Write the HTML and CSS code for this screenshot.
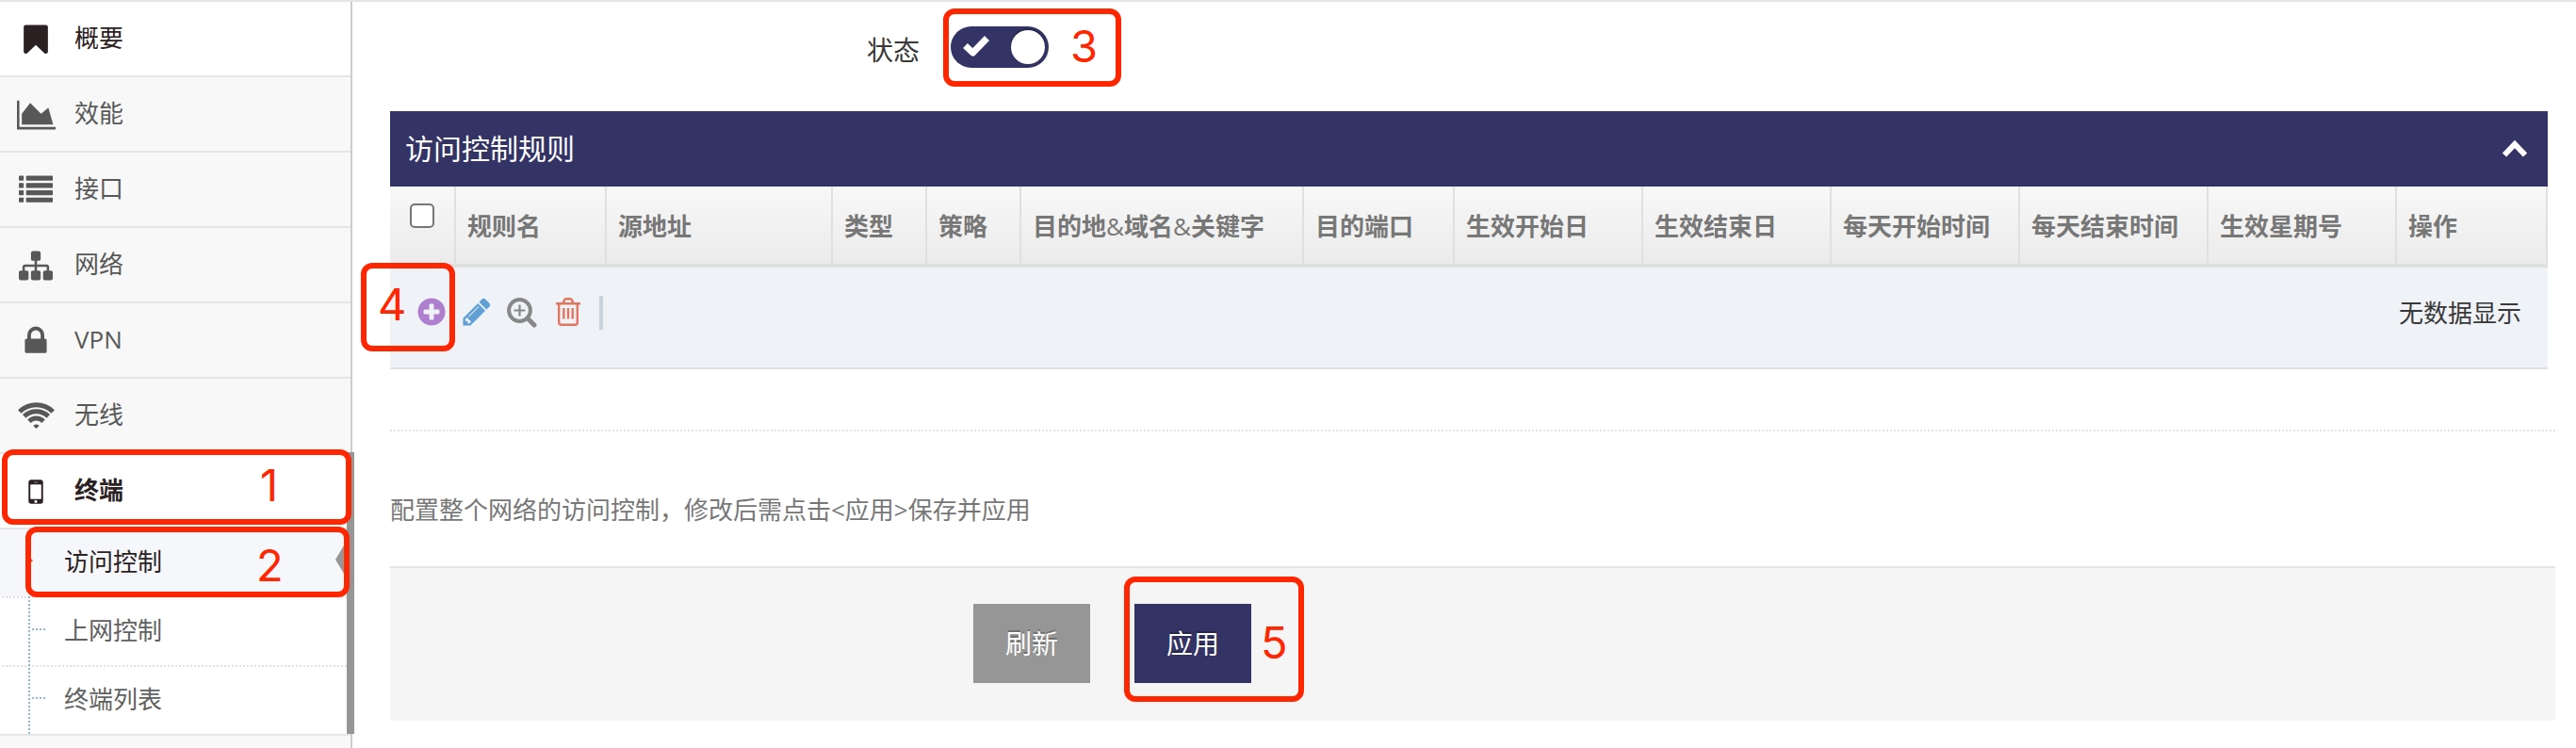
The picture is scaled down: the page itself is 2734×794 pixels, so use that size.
FILE: index.html
```html
<!DOCTYPE html>
<html lang="zh-CN">
<head>
<meta charset="utf-8">
<title>访问控制</title>
<link rel="stylesheet" href="styles.css">
</head>
<body>
<div class="page">
  <nav class="sidebar">
    <a class="item current"><svg class="icon" viewBox="0 0 1792 1792"><path d="M1420 128q23 0 44 9 33 13 52.500 41t19.500 62v1289q0 34-19.500 62t-52.500 41q-19 8-44 8-48 0-83-32l-441-424-441 424q-36 33-83 33-23 0-44-9-33-13-52.500-41t-19.500-62v-1289q0-34 19.500-62t52.500-41q21-9 44-9h1048z"/></svg><span>概要</span></a>
    <a class="item"><svg class="icon wide" viewBox="0 0 2048 1792"><path d="M2048 1536v128h-2048v-1536h128v1408h1920zm-384-1024l256 896h-1664v-576l448-576 576 576z"/></svg><span>效能</span></a>
    <a class="item"><svg class="icon" viewBox="0 0 1792 1792"><g><rect y="128" width="256" height="256" rx="32"/><rect x="384" y="128" width="1408" height="256" rx="32"/><rect y="512" width="256" height="256" rx="32"/><rect x="384" y="512" width="1408" height="256" rx="32"/><rect y="896" width="256" height="256" rx="32"/><rect x="384" y="896" width="1408" height="256" rx="32"/><rect y="1280" width="256" height="256" rx="32"/><rect x="384" y="1280" width="1408" height="256" rx="32"/></g></svg><span>接口</span></a>
    <a class="item"><svg class="icon" viewBox="0 0 1792 1792"><path d="M1792 1248v320q0 40-28 68t-68 28h-320q-40 0-68-28t-28-68v-320q0-40 28-68t68-28h96v-192h-512v192h96q40 0 68 28t28 68v320q0 40-28 68t-68 28h-320q-40 0-68-28t-28-68v-320q0-40 28-68t68-28h96v-192h-512v192h96q40 0 68 28t28 68v320q0 40-28 68t-68 28h-320q-40 0-68-28t-28-68v-320q0-40 28-68t68-28h96v-192q0-52 38-90t90-38h512v-192h-96q-40 0-68-28t-28-68v-320q0-40 28-68t68-28h320q40 0 68 28t28 68v320q0 40-28 68t-68 28h-96v192h512q52 0 90 38t38 90v192h96q40 0 68 28t28 68z"/></svg><span>网络</span></a>
    <a class="item"><svg class="icon" viewBox="0 0 1792 1792"><path d="M640 768h512v-192q0-106-75-181t-181-75-181 75-75 181v192zm832 96v576q0 40-28 68t-68 28h-960q-40 0-68-28t-28-68v-576q0-40 28-68t68-28h32v-192q0-184 132-316t316-132 316 132 132 316v192h32q40 0 68 28t28 68z"/></svg><span>VPN</span></a>
    <a class="item"><svg class="icon wide" viewBox="0 0 41 36"><g fill="none" stroke="currentColor" stroke-width="5"><path d="M2.800 13a25.100 25.100 0 0 1 35.400 0"/><path d="M7.700 17.900a18.200 18.200 0 0 1 25.600 0"/><path d="M12.900 23.200a10.700 10.700 0 0 1 15.200 0"/></g><path d="M20.500 31l-3.200-3q3.200-2.800 6.400 0z"/></svg><span>无线</span></a>
    <a class="item open"><svg class="icon" viewBox="0 0 1792 1792"><path d="M976 1408q0-33-23.500-56.500t-56.500-23.500-56.500 23.500-23.500 56.500 23.500 56.500 56.500 23.500 56.500-23.500 23.500-56.500zm208-160v-704q0-13-9.500-22.500t-22.500-9.500h-512q-13 0-22.500 9.500t-9.500 22.500v704q0 13 9.500 22.500t22.500 9.500h512q13 0 22.500-9.500t9.500-22.500zm-192-848q0-16-16-16h-160q-16 0-16 16t16 16h160q16 0 16-16zm288-16v1024q0 52-38 90t-90 38h-512q-52 0-90-38t-38-90v-1024q0-52 38-90t90-38h512q52 0 90 38t38 90z"/></svg><span>终端</span></a>
    <div class="submenu">
      <a class="sub active">访问控制<i class="caret"></i><i class="pointer"></i></a>
      <a class="sub">上网控制</a>
      <a class="sub">终端列表</a>
      <i class="tree"></i>
    </div>
    <i class="scrollbar"></i>
  </nav>

  <main class="main">
    <div class="status">
      <span class="status-label">状态</span>
      <span class="toggle"><svg class="check" viewBox="0 0 30 24"><path d="M3.500 12.500L11.500 20 26.500 4.500" fill="none" stroke="#fff" stroke-width="7" stroke-linejoin="round"/></svg><i class="knob"></i></span>
    </div>

    <section class="panel">
      <header class="panel-head"><h2 class="panel-title">访问控制规则</h2>
        <svg class="chevron" viewBox="0 0 28 20"><path d="M3 16.500L14 5l11 11.500" fill="none" stroke="#fff" stroke-width="6"/></svg>
      </header>
      <div class="grid-head">
        <div class="cell check-cell"><i class="checkbox"></i></div>
        <div class="cell">规则名</div><div class="cell">源地址</div><div class="cell">类型</div><div class="cell">策略</div>
        <div class="cell">目的地<span class="amp">&amp;</span>域名<span class="amp">&amp;</span>关键字</div><div class="cell">目的端口</div>
        <div class="cell">生效开始日</div><div class="cell">生效结束日</div><div class="cell">每天开始时间</div><div class="cell">每天结束时间</div><div class="cell">生效星期号</div><div class="cell">操作</div>
      </div>
      <div class="pager">
        <div class="tools">
          <svg class="tool add" viewBox="0 0 1792 1792"><path d="M1344 960v-128q0-26-19-45t-45-19h-256v-256q0-26-19-45t-45-19h-128q-26 0-45 19t-19 45v256h-256q-26 0-45 19t-19 45v128q0 26 19 45t45 19h256v256q0 26 19 45t45 19h128q26 0 45-19t19-45v-256h256q26 0 45-19t19-45zm320-64q0 209-103 385.500t-279.500 279.500-385.500 103-385.500-103-279.500-279.500-103-385.500 103-385.500 279.500-279.500 385.500-103 385.500 103 279.500 279.500 103 385.500z"/></svg>
          <svg class="tool edit" viewBox="0 0 1792 1792"><path d="M491 1536l91-91-235-235-91 91v107h128v128h107zm523-928q0-22-22-22-10 0-17 7l-542 542q-7 7-7 17 0 22 22 22 10 0 17-7l542-542q7-7 7-17zm-54-192l416 416-832 832h-416v-416zm683 96q0 53-37 90l-166 166-416-416 166-165q36-38 90-38 53 0 91 38l235 234q37 39 37 91z"/></svg>
          <svg class="tool view" viewBox="0 0 34 34"><g fill="none" stroke="currentColor"><circle cx="14.500" cy="15.500" r="11.400" stroke-width="4"/><path d="M22.800 23.800l7.200 7.200" stroke-width="5" stroke-linecap="round"/><path d="M8.500 15.500h12M14.500 9.500v12" stroke-width="2.200"/></g></svg>
          <svg class="tool remove" viewBox="0 0 34 34"><g fill="none" stroke="currentColor" stroke-width="2.400"><path d="M4 8.200h26M11.500 8l1.600-3.800q.6-1 1.800-1h4.200q1.200 0 1.800 1L22.500 8" /><path d="M7.200 8.500v19.500q0 2.800 2.400 2.800h14.800q2.400 0 2.400-2.800V8.500M12.300 13v11.500M17 13v11.500M21.700 13v11.500"/></g></svg>
          <i class="divider"></i>
        </div>
        <span class="empty">无数据显示</span>
      </div>
    </section>

    <div class="rule"></div>
    <p class="note">配置整个网络的访问控制，修改后需点击&lt;应用&gt;保存并应用</p>
    <footer class="actions"><button class="btn">刷新</button><button class="btn primary">应用</button></footer>
  </main>

  <div class="mark mark-1"><b>1</b></div>
  <div class="mark mark-2"><b>2</b></div>
  <div class="mark mark-3"><b>3</b></div>
  <div class="mark mark-4"><b>4</b></div>
  <div class="mark mark-5"><b>5</b></div>
</div>
</body>
</html>
```
FILE: styles.css
```css
* { box-sizing: border-box; }
body { margin: 0; background: #fff; font: 26px/40px "Open Sans", "Noto Sans CJK SC", sans-serif; color: #393939; }
.page { position: relative; display: flex; width: 2734px; height: 794px; overflow: hidden; border-top: 2px solid #e5e5e5; }

/* sidebar */
.sidebar { position: relative; flex: none; width: 374px; background: #f8f8f8; border-right: 2px solid #ccc; }
.item { display: flex; align-items: center; height: 80px; padding-left: 17px; gap: 20px; border-bottom: 2px solid #e5e5e5; color: #585858; }
.item span { line-height: 40px; margin-bottom: 2px; }
.icon { flex: none; width: 36px; height: 36px; margin: 1px 3px 0; fill: currentColor; }
.icon.wide { width: 41px; margin: 1px 0 0 .5px; }
.icon.wide + span { margin-left: .5px; }
.item.current { background: #fff; color: #2b2122; }
.item.open { background: #fff; color: #2b2122; font-weight: 700; }
.submenu { position: relative; background: #fff; height: 219px; border-bottom: 2px solid #e5e5e5; }
.sub { position: relative; display: block; height: 73px; padding: 14px 0 0 68px; margin-right: 4px; line-height: 40px; color: #616161; }
.sub + .sub { background: repeating-linear-gradient(90deg, transparent 0 2px, #e0e0e0 2px 4px) 0 0 / 100% 2px no-repeat; padding-top: 16px; }
.sub:first-child { height: 71px; }
.sub.active { background: #f5f7fb; color: #2b2122; }
.sub + .sub::after { content: ""; position: absolute; left: 34px; top: 34px; width: 14px; height: 2px; background: repeating-linear-gradient(90deg, #8fb8d8 0 2px, transparent 2px 4px); }
.caret { position: absolute; left: 29px; top: 27px; border: solid transparent; border-width: 6px 0 6px 6px; border-left-color: #c86139; }
.pointer { position: absolute; right: 0; top: 12px; border: solid transparent; border-width: 20px 12px 20px 0; border-right-color: #969696; }
.tree { position: absolute; left: 30px; top: 71px; bottom: 0; width: 2px; background: repeating-linear-gradient(180deg, #8fb8d8 0 2px, transparent 2px 4px); }
.scrollbar { position: absolute; left: 368px; top: 478px; width: 8px; height: 299px; background: #969696; }

/* content */
.main { flex: none; width: 2298px; margin-left: 40px; }
.status { display: flex; align-items: center; height: 116px; padding: 0 0 20px 506px; font-size: 28px; }
.status-label { width: 89px; line-height: 40px; margin-top: 6px; }
.toggle { position: relative; width: 104px; height: 44px; border-radius: 22px; background: #333365; }
.check { position: absolute; left: 12px; top: 8px; width: 30px; height: 24px; }
.knob { position: absolute; right: 4px; top: 4px; width: 36px; height: 36px; border-radius: 50%; background: #fff; box-shadow: 0 -1px 2px rgba(0, 0, 0, .4); }
.panel { width: 2290px; }
.panel-head { display: flex; justify-content: space-between; align-items: center; height: 80px; padding: 0 21px 0 16px; background: #333365; color: #fff; }
.panel-title { margin: 0; font-size: 30px; font-weight: 400; line-height: 40px; }
.chevron { width: 28px; height: 20px; }
.grid-head { display: grid; grid-template-columns: 70px 160px 240px 100px 100px 300px 160px 200px 200px 200px 200px 200px 160px; height: 86px; border-bottom: 4px solid #e0e0e0; background: linear-gradient(#f8f8f8, #ebebeb); }
.cell { padding: 22px 0 0 12px; border-right: 2px solid #e0e0e0; color: #777; font-weight: 700; line-height: 40px; white-space: nowrap; }
.amp { font-weight: 500; }
.check-cell { padding: 18px 0 0 21px; }
.checkbox { display: block; width: 26px; height: 26px; border: 2px solid #767676; border-radius: 5px; background: #fff; }
.pager { display: flex; justify-content: space-between; height: 108px; padding: 28px 28px 0 27px; border-bottom: 2px solid #e0e0e0; background: #eff2f7; }
.empty { line-height: 40px; }
.tools { display: flex; gap: 14.200px; padding-top: 2px; }
.tool { width: 34px; height: 34px; fill: currentColor; }
.add { color: #ae7fce; }
.edit { color: #60a0d4; }
.view { color: #888; }
.remove { color: #e27560; }
.divider { width: 4px; height: 36px; margin-left: 2.200px; background: #c8d3dc; }
.rule { height: 2px; margin-top: 64px; background: repeating-linear-gradient(90deg, #e2e2e2 0 2px, transparent 2px 4px); }
.note { margin: 63px 0 0; height: 80px; line-height: 40px; color: #777; }
.actions { display: flex; gap: 47px; height: 164px; padding: 38px 0 0 619px; border-top: 2px solid #e5e5e5; background: #f5f5f5; }
.btn { width: 124px; height: 84px; padding: 0; border: 0; background: #969696; color: #fff; font: 28px/40px "Open Sans", "Noto Sans CJK SC", sans-serif; text-shadow: 0 -2px 0 rgba(0, 0, 0, .25); }
.btn.primary { background: #333365; }

/* numbered callouts */
.mark { position: absolute; border: 6px solid #ff2600; border-radius: 12px; color: #ff2600; }
.mark b { position: absolute; font: 400 47px/48px Inter, sans-serif; }
.mark-1 { left: 2px; top: 475px; width: 371px; height: 80px; }
.mark-1 b { left: 268px; top: 8px; }
.mark-2 { left: 27px; top: 557px; width: 344px; height: 75px; }
.mark-2 b { left: 239px; top: 11px; }
.mark-3 { left: 1001px; top: 7px; width: 189px; height: 83px; }
.mark-3 b { left: 129px; top: 10px; }
.mark-4 { left: 383px; top: 277px; width: 100px; height: 94px; }
.mark-4 b { left: 12px; top: 14px; }
.mark-5 { left: 1193px; top: 610px; width: 191px; height: 133px; }
.mark-5 b { left: 139px; top: 40px; }
```
